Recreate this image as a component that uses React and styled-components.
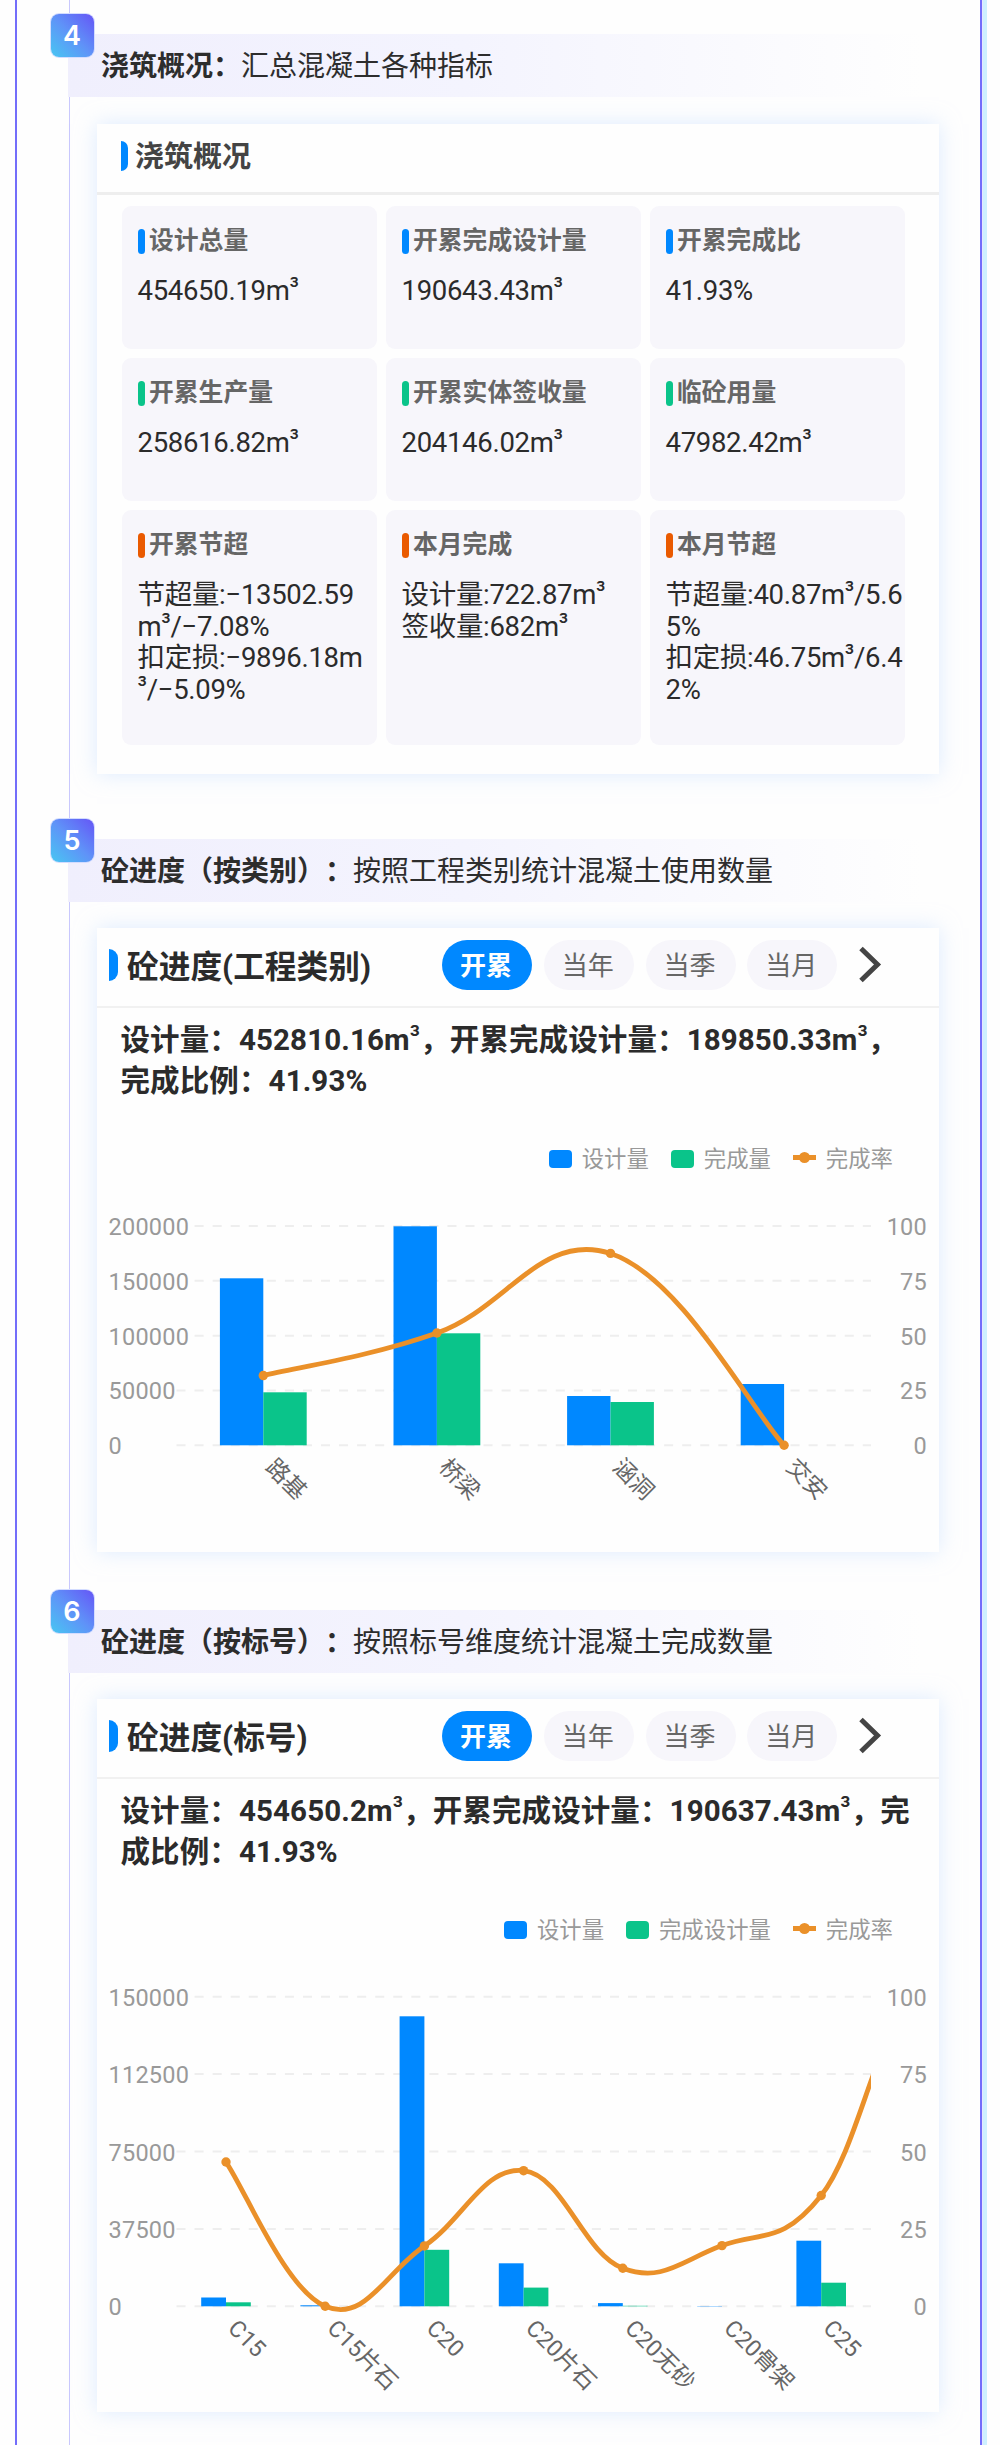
import styled, { createGlobalStyle } from 'styled-components'

const BLUE = '#0088ff';
const GREEN = '#0ac48a';
const ORANGE = '#ea9029';

const overview = [
    { title: '设计总量', color: BLUE, lines: ['454650.19m³'] },
    { title: '开累完成设计量', color: BLUE, lines: ['190643.43m³'] },
    { title: '开累完成比', color: BLUE, lines: ['41.93%'] },
    { title: '开累生产量', color: GREEN, lines: ['258616.82m³'] },
    { title: '开累实体签收量', color: GREEN, lines: ['204146.02m³'] },
    { title: '临砼用量', color: GREEN, lines: ['47982.42m³'] },
    { title: '开累节超', color: '#ea5a00', lines: ['节超量:−13502.59', 'm³/−7.08%', '扣定损:−9896.18m', '³/−5.09%'] },
    { title: '本月完成', color: '#ea5a00', lines: ['设计量:722.87m³', '签收量:682m³'] },
    { title: '本月节超', color: '#ea5a00', lines: ['节超量:40.87m³/5.6', '5%', '扣定损:46.75m³/6.4', '2%'] },
];

// the chart plots are in card pixels, heights are measured up from the base line
const categoryChart = {
    height: 352,
    top: 26,
    base: 245.3,
    firstX: 166.3,
    step: 173.6,
    barWidth: 43.4,
    left: ['200000', '150000', '100000', '50000', '0'],
    items: [
        { name: '路基', design: 167, done: 53, rate: 31.8 },
        { name: '桥梁', design: 219, done: 112, rate: 51.2 },
        { name: '涵洞', design: 49.3, done: 43.3, rate: 87.5 },
        { name: '交安', design: 61.3, done: 0, rate: 0 },
    ],
};

const gradeChart = {
    height: 441,
    top: 25.7,
    base: 335.3,
    firstX: 129,
    step: 99.2,
    barWidth: 24.8,
    left: ['150000', '112500', '75000', '37500', '0'],
    items: [
        { name: 'C15', design: 8.8, done: 4, rate: 46.6 },
        { name: 'C15片石', design: 1, done: 0, rate: 0 },
        { name: 'C20', design: 290, done: 56.5, rate: 19.5 },
        { name: 'C20片石', design: 43, done: 18.7, rate: 43.8 },
        { name: 'C20无砂', design: 3.2, done: 0.5, rate: 12.3 },
        { name: 'C20骨架', design: 0.3, done: 0, rate: 19.6 },
        { name: 'C25', design: 65.6, done: 23.6, rate: 35.8 },
        { name: '', design: 0, done: 0, rate: 100 },
        { name: '', design: 0, done: 0, rate: 53.7 },
    ],
};

const smoothPath = (pts) => {
    let d = `M${pts[0].x} ${pts[0].y}`;
    for (let i = 0; i < pts.length - 1; i++) {
        const prev = pts[i - 1] || pts[i];
        const cur = pts[i];
        const next = pts[i + 1];
        const after = pts[i + 2] || next;
        const ax = cur.x + (next.x - prev.x) * 0.2;
        const ay = cur.y + (next.y - prev.y) * 0.2;
        const bx = next.x - (after.x - cur.x) * 0.2;
        const by = next.y - (after.y - cur.y) * 0.2;
        d += ` C${ax} ${ay} ${bx} ${by} ${next.x} ${next.y}`;
    }
    return d;
};

// puts the cube sign a little above the digits
const Line = ({ text }) => (
    <div>
        {text.split(/(³)/).map((part, i) => part === '³' ? <Cube key={i}>³</Cube> : part)}
    </div>
);

const Chart = ({ id, chart }) => {
    const { height, top, base, firstX, step, barWidth, left, items } = chart;
    const gap = (base - top) / 4;
    const points = items.map((item, i) => ({
        x: firstX + i * step,
        y: base - (item.rate / 100) * (base - top),
    }));

    return <ChartSvg width="842" height={height} viewBox={`0 0 842 ${height}`}>
        <clipPath id={id}>
            <rect x="79" y="0" width="695" height={height} />
        </clipPath>
        {left.map((label, i) => {
            const y = top + i * gap;
            return <g key={label}>
                <GridLine x1={label.length > 5 ? 97.6 : 79.5} x2="774" y1={y} y2={y} />
                <AxisText x="11.5" y={y + 9}>{label}</AxisText>
                <AxisText x="830" y={y + 9} textAnchor="end">{100 - i * 25}</AxisText>
            </g>
        })}
        <g clipPath={`url(#${id})`}>
            {items.map((item, i) => <g key={i}>
                <rect x={points[i].x - barWidth} y={base - item.design} width={barWidth} height={item.design} fill={BLUE} />
                <rect x={points[i].x} y={base - item.done} width={barWidth} height={item.done} fill={GREEN} />
            </g>)}
            <path d={smoothPath(points)} fill="none" stroke={ORANGE} strokeWidth="4.8" />
            {points.map((p, i) => <circle key={i} cx={p.x} cy={p.y} r="4.7" fill={ORANGE} />)}
        </g>
        {items.map((item, i) => item.name && (
            <NameText key={i} transform={`translate(${points[i].x + 6.5} ${base + 17.5}) rotate(45)`} y="8">
                {item.name}
            </NameText>
        ))}
    </ChartSvg>
};

const StepHead = ({ no, title, text, gap }) => (
    <Band $gap={gap}>
        <Badge>{no}</Badge>
        <b>{title}：</b>{text}
    </Band>
);

const ProgressCard = ({ id, title, lines, done, chart, top, height }) => (
    <Card $top={top} $height={height}>
        <TabHead>
            <TabTitle>{title}</TabTitle>
            <Tabs>
                <Tab $active>开累</Tab>
                <Tab>当年</Tab>
                <Tab>当季</Tab>
                <Tab>当月</Tab>
            </Tabs>
            <svg width="24" height="40" viewBox="0 0 24 40" fill="none" stroke="#444" strokeWidth="5">
                <path d="M2 3.5 L18.5 19.5 L2 35.5" />
            </svg>
        </TabHead>
        <Summary>
            {lines.map((line) => <Line key={line} text={line} />)}
        </Summary>
        <Legend>
            <LegendItem><Swatch $color={BLUE} />设计量</LegendItem>
            <LegendItem><Swatch $color={GREEN} />{done}</LegendItem>
            <LegendItem><LineMark />完成率</LegendItem>
        </Legend>
        <Chart id={id} chart={chart} />
    </Card>
);

const App = () => {
    return <>
        <GlobalStyle />
        <Frame>
            <Timeline>
                <StepHead no="4" title="浇筑概况" text="汇总混凝土各种指标" gap={34} />
                <Card $top={27} $height={650}>
                    <CardHead>浇筑概况</CardHead>
                    <Grid>
                        {overview.map((item) => <Cell key={item.title}>
                            <CellTitle $color={item.color}>{item.title}</CellTitle>
                            <CellValue>
                                {item.lines.map((line) => <Line key={line} text={line} />)}
                            </CellValue>
                        </Cell>)}
                    </Grid>
                </Card>

                <StepHead no="5" title="砼进度（按类别）" text="按照工程类别统计混凝土使用数量" gap={65} />
                <ProgressCard
                    id="category"
                    top={26}
                    height={624}
                    title="砼进度(工程类别)"
                    done="完成量"
                    lines={['设计量：452810.16m³，开累完成设计量：189850.33m³，', '完成比例：41.93%']}
                    chart={categoryChart}
                />

                <StepHead no="6" title="砼进度（按标号）" text="按照标号维度统计混凝土完成数量" gap={58} />
                <ProgressCard
                    id="grade"
                    top={26}
                    height={713}
                    title="砼进度(标号)"
                    done="完成设计量"
                    lines={['设计量：454650.2m³，开累完成设计量：190637.43m³，完', '成比例：41.93%']}
                    chart={gradeChart}
                />
            </Timeline>
        </Frame>
    </>
};
export default App;

const GlobalStyle = createGlobalStyle`
body{
    margin:0;
    background:#fefefe;
    font-family: Roboto, "Noto Sans CJK SC", sans-serif;
    text-spacing-trim:space-all;
}
*{
    box-sizing:border-box;
}
`;
const Frame = styled.main`
width:967px;
height:2445px;
margin-left:15px;
border:solid #736dfa;
border-width:0 2px;
box-shadow:1px 0 0 #e6e6ff, 5px 0 0 #cdf0ff;
overflow-y:clip;
`;
const Timeline = styled.div`
height:100%;
margin-left:52px;
border-left:1px solid #c9c8fd;
display:flex;
flex-direction:column;
`;
const Band = styled.div`
position:relative;
flex:none;
height:63px;
width:880px;
margin:${(p) => p.$gap}px 0 0 -2px;
padding:0 0 4px 33px;
display:flex;
align-items:center;
font-size:28px;
color:#2d2d2d;
white-space:nowrap;
background:linear-gradient(90deg, #f0effd 0%, #f4f4fe 45%, #fefefe 97%);
`;
const Badge = styled.span`
position:absolute;
left:-17px;
top:-20px;
width:43px;
height:43px;
padding:0 1px 1px 0;
border-radius:8px;
box-shadow:0 0 0 1px #d3dcff;
display:flex;
align-items:center;
justify-content:center;
font-family: Inter, sans-serif;
font-size:27px;
font-weight:600;
color:#fff;
background:linear-gradient(45deg, #48c6f2 0%, #5f93f8 50%, #6555f6 100%);
`;
const Card = styled.section`
flex:none;
width:842px;
height:${(p) => p.$height}px;
margin:${(p) => p.$top}px 0 0 27px;
background:#fefefe;
box-shadow:0 0 20px rgba(190,217,255,.5);
`;
const CardHead = styled.h2`
height:71px;
margin:0;
padding:0 0 9px 24px;
border-bottom:3px solid #eee;
display:flex;
align-items:center;
font-size:29px;
color:#444;
&::before{
    content:'';
    width:7px;
    height:30px;
    margin:4px 7px 0 0;
    border-radius:0 7px 7px 0;
    background:${BLUE};
}
`;
const Grid = styled.div`
display:grid;
grid-template-columns:repeat(3, 255px);
grid-template-rows:143px 143px 235px;
gap:9px;
padding:11px 0 0 24.5px;
`;
const Cell = styled.div`
padding:18.5px 0 0 16px;
border-radius:9px;
background:#f7f6fb;
white-space:nowrap;
`;
const CellTitle = styled.div`
height:26px;
display:flex;
align-items:center;
font-size:24.8px;
font-weight:bold;
color:#666;
&::before{
    content:'';
    width:7px;
    height:25px;
    margin:7px 4.5px 0 0;
    border-radius:4px;
    background:${(p) => p.$color};
}
`;
const CellValue = styled.div`
margin-top:24.5px;
font-size:27.5px;
line-height:31.7px;
letter-spacing:-.3px;
color:#2b2b2b;
`;
const Cube = styled.span`
font-size:.94em;
font-weight:400;
line-height:0;
vertical-align:5px;
`;
const TabHead = styled.div`
height:80px;
padding:0 0 4px 12px;
border-bottom:2px solid #f1f1f1;
display:flex;
align-items:center;
svg{
    margin:0 0 0 22px;
}
`;
const TabTitle = styled.h2`
width:333px;
margin:0;
padding-bottom:3px;
display:flex;
align-items:center;
font-size:31.7px;
color:#2b2b2b;
&::before{
    content:'';
    width:9px;
    height:32px;
    margin:3px 9px 0 0;
    border-radius:0 9px 9px 0;
    background:${BLUE};
}
`;
const Tabs = styled.div`
display:flex;
gap:11.75px;
`;
const Tab = styled.span`
width:90px;
height:50px;
padding:0 2px 3px 0;
border-radius:25px;
display:flex;
align-items:center;
justify-content:center;
font-size:26px;
font-weight:${(p) => p.$active ? 'bold' : 'normal'};
color:${(p) => p.$active ? '#fff' : '#666'};
background:${(p) => p.$active ? BLUE : '#f7f6fb'};
`;
const Summary = styled.div`
height:92px;
padding:12px 0 0 23.5px;
font-size:29.5px;
font-weight:bold;
line-height:40.5px;
letter-spacing:.12px;
white-space:nowrap;
color:#2b2b2b;
${Cube}{
    font-weight:500;
}
`;
const Legend = styled.div`
height:30px;
margin:42px 46px 28px 0;
display:flex;
justify-content:flex-end;
gap:22.4px;
font-size:22.4px;
color:#999;
`;
const LegendItem = styled.div`
display:flex;
align-items:center;
gap:9.5px;
`;
const Swatch = styled.i`
width:23px;
height:18px;
margin-top:4px;
border-radius:4px;
background:${(p) => p.$color};
`;
const LineMark = styled.i`
width:23px;
height:5px;
display:flex;
align-items:center;
justify-content:center;
background:${ORANGE};
&::before{
    content:'';
    width:11px;
    height:11px;
    flex:none;
    border-radius:50%;
    background:${ORANGE};
}
`;
const ChartSvg = styled.svg`
display:block;
`;
const GridLine = styled.line`
stroke:#eee;
stroke-width:2;
stroke-dasharray:9.03 9.03;
`;
const AxisText = styled.text`
font-size:23.5px;
letter-spacing:.25px;
fill:#999;
`;
const NameText = styled.text`
font-size:23.2px;
fill:#666;
`;
